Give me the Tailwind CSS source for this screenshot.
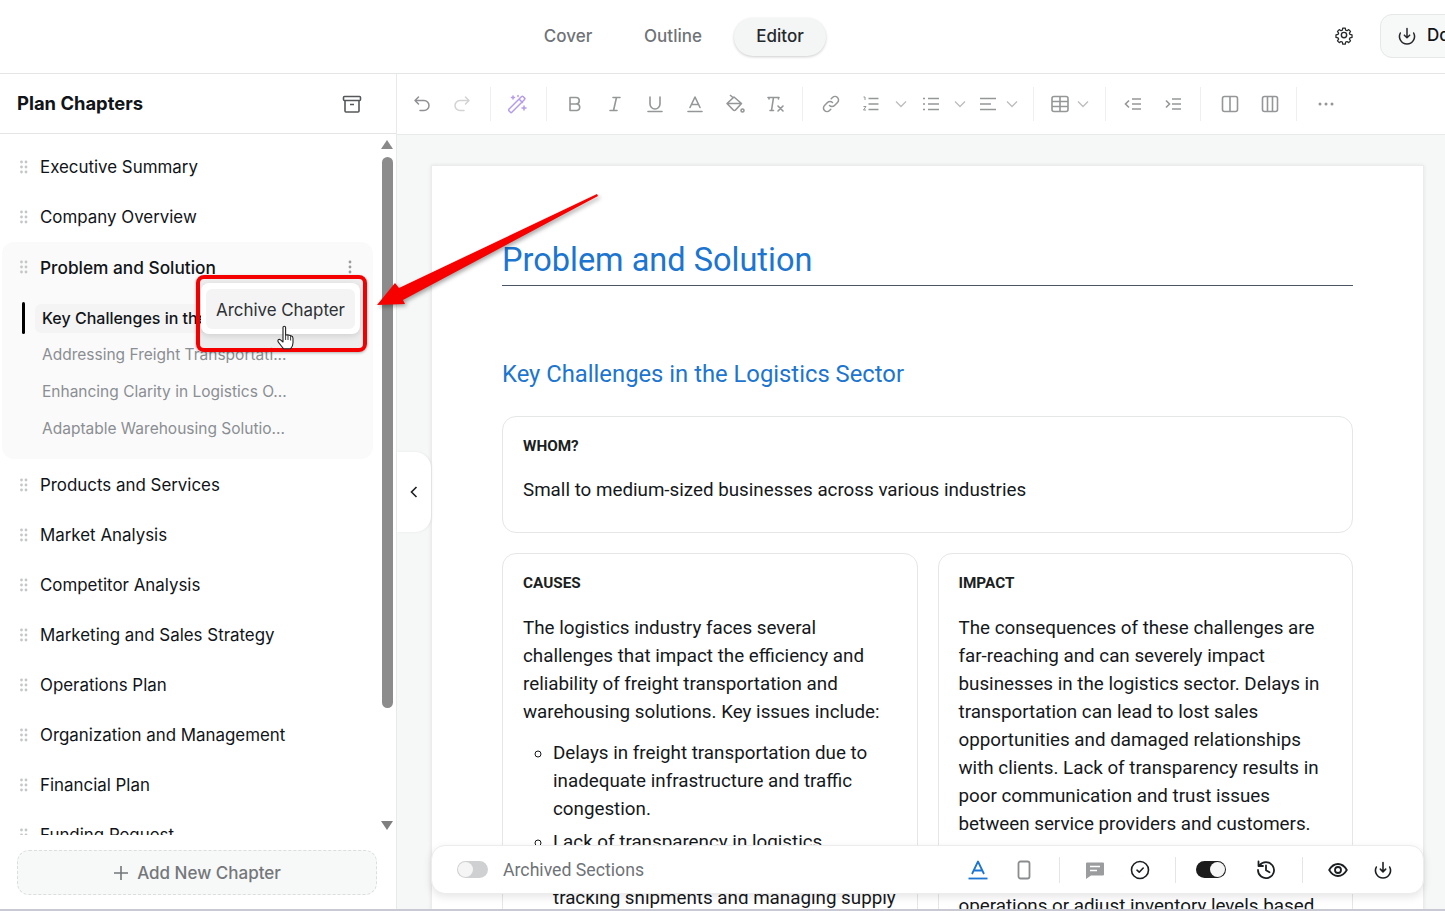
<!DOCTYPE html>
<html lang="en">
<head>
    <meta charset="UTF-8">
    <title>Plan Editor</title>
    <script src="https://cdn.jsdelivr.net/npm/@tailwindcss/browser@4"></script>
</head>
<body class="relative h-[911px] w-[1445px] overflow-hidden bg-white font-['Inter',sans-serif] text-[#111418]">

    <!-- top bar -->
    <header class="flex h-[74px] items-center border-b border-[#e4e5e5] pl-[522px] pr-0">
        <nav class="flex items-center text-[17px] font-medium text-[#6f7377]">
            <a class="flex h-[38px] w-[92px] items-center justify-center">Cover</a>
            <a class="ml-[14px] flex h-[38px] w-[90px] items-center justify-center">Outline</a>
            <a class="ml-[16px] flex h-[38px] w-[92px] items-center justify-center rounded-full bg-[#f4f5f5] text-[#26292c] shadow-[0_1px_3px_rgba(0,0,0,0.2)]">Editor</a>
        </nav>
        <svg class="-mt-[3px] ml-[508px] h-5 w-5 shrink-0" viewBox="0 0 24 24" fill="none" stroke="#26292c" stroke-width="1.7" stroke-linejoin="round"><path d="M10.3 2.8h3.4l.5 2.7 1.8.8 2.3-1.5 2.4 2.4-1.5 2.3.8 1.8 2.7.5v3.4l-2.7.5-.8 1.8 1.5 2.3-2.4 2.4-2.3-1.5-1.8.8-.5 2.7h-3.4l-.5-2.7-1.8-.8-2.3 1.5-2.4-2.4 1.5-2.3-.8-1.8-2.7-.5v-3.4l2.7-.5.8-1.8-1.5-2.3 2.4-2.4 2.3 1.5 1.8-.8z" transform="translate(1.2 1.2) scale(.9)"/><circle cx="12" cy="12" r="3.2"/></svg>
        <button class="-mt-[2px] ml-[26px] flex h-[44px] w-[150px] shrink-0 items-center gap-[10px] rounded-xl border border-[#e6e8e8] bg-[#f7f8f8] pl-[16px] text-[17px] font-medium text-[#111418]">
            <svg class="h-[20px] w-[20px]" viewBox="0 0 24 24" fill="none" stroke="#26292c" stroke-width="1.8" stroke-linecap="round" stroke-linejoin="round"><path d="M4 8.400A9 9 0 1 0 20 8.400M12 3v11M8.800 11 12 14.200 15.200 11"/></svg>
            Download
        </button>
    </header>

    <div class="flex h-[837px]">
        <!-- sidebar -->
        <aside class="flex w-[397px] shrink-0 flex-col border-r border-[#e8e9e9]">
            <div class="flex h-[60px] shrink-0 items-center justify-between border-b border-[#e4e5e5] pl-[17px] pr-[34px]">
                <h2 class="text-[18.400px] font-bold">Plan Chapters</h2>
                <svg class="h-[20px] w-[20px]" viewBox="0 0 20 20" fill="none" stroke="#55585b" stroke-width="1.6" stroke-linejoin="round"><rect x="1.5" y="2.5" width="17" height="4" rx="1"/><path d="M3 6.5V17a1 1 0 0 0 1 1h12a1 1 0 0 0 1-1V6.5M8 10.5h4"/></svg>
            </div>
            <div class="flex h-[701px] shrink-0">
                <div class="h-full w-[379px] overflow-hidden pt-[8px] text-[16.900px]">
                    <div class="flex h-[50px] items-center pl-[20px] pt-[2px]"><svg class="-mt-[2px] mr-[12px] h-[14px] w-[8px]" viewBox="0 0 8 14" fill="#c4c6c8"><circle cx="1.5" cy="2" r="1.4"/><circle cx="6" cy="2" r="1.4"/><circle cx="1.5" cy="7" r="1.4"/><circle cx="6" cy="7" r="1.4"/><circle cx="1.5" cy="12" r="1.4"/><circle cx="6" cy="12" r="1.4"/></svg>Executive Summary</div>
                    <div class="flex h-[50px] items-center pl-[20px] pt-[2px]"><svg class="-mt-[2px] mr-[12px] h-[14px] w-[8px]" viewBox="0 0 8 14" fill="#c4c6c8"><circle cx="1.5" cy="2" r="1.4"/><circle cx="6" cy="2" r="1.4"/><circle cx="1.5" cy="7" r="1.4"/><circle cx="6" cy="7" r="1.4"/><circle cx="1.5" cy="12" r="1.4"/><circle cx="6" cy="12" r="1.4"/></svg>Company Overview</div>
                    <div class="ml-[2px] mr-[6px] h-[217px] rounded-xl bg-[#fafafa]">
                        <div class="flex h-[50px] items-center pl-[18px] pr-[21px] pt-[2px]"><svg class="-mt-[2px] mr-[12px] h-[14px] w-[8px]" viewBox="0 0 8 14" fill="#c4c6c8"><circle cx="1.5" cy="2" r="1.4"/><circle cx="6" cy="2" r="1.4"/><circle cx="1.5" cy="7" r="1.4"/><circle cx="6" cy="7" r="1.4"/><circle cx="1.5" cy="12" r="1.4"/><circle cx="6" cy="12" r="1.4"/></svg><span class="flex-1 text-[17.300px] font-medium">Problem and Solution</span><svg class="-mt-[2px] h-[14px] w-[4px]" viewBox="0 0 4 14" fill="#9a9c9e"><circle cx="2" cy="2" r="1.4"/><circle cx="2" cy="7" r="1.4"/><circle cx="2" cy="12" r="1.4"/></svg></div>
                        <div class="flex items-center pl-[20px] pt-[10px]">
                            <span class="h-[32px] w-[3px] rounded-full bg-black"></span>
                            <span class="ml-[10px] flex h-[29px] w-[170px] items-center overflow-hidden whitespace-nowrap rounded-l-md bg-[#f4f4f4] pl-[7px] text-[16px] font-medium">Key Challenges in the Logistics Sector</span>
                        </div>
                        <div class="pl-[40px] pt-[2px] text-[15.5px] text-[#8b8e93]">
                            <p class="flex h-[37px] items-center">Addressing Freight Transportati...</p>
                            <p class="flex h-[37px] items-center">Enhancing Clarity in Logistics O...</p>
                            <p class="flex h-[37px] items-center">Adaptable Warehousing Solutio...</p>
                        </div>
                    </div>
                    <div class="mt-[1px] flex h-[50px] items-center pl-[20px] pt-[2px]"><svg class="-mt-[2px] mr-[12px] h-[14px] w-[8px]" viewBox="0 0 8 14" fill="#c4c6c8"><circle cx="1.5" cy="2" r="1.4"/><circle cx="6" cy="2" r="1.4"/><circle cx="1.5" cy="7" r="1.4"/><circle cx="6" cy="7" r="1.4"/><circle cx="1.5" cy="12" r="1.4"/><circle cx="6" cy="12" r="1.4"/></svg>Products and Services</div>
                    <div class="flex h-[50px] items-center pl-[20px] pt-[2px]"><svg class="-mt-[2px] mr-[12px] h-[14px] w-[8px]" viewBox="0 0 8 14" fill="#c4c6c8"><circle cx="1.5" cy="2" r="1.4"/><circle cx="6" cy="2" r="1.4"/><circle cx="1.5" cy="7" r="1.4"/><circle cx="6" cy="7" r="1.4"/><circle cx="1.5" cy="12" r="1.4"/><circle cx="6" cy="12" r="1.4"/></svg>Market Analysis</div>
                    <div class="flex h-[50px] items-center pl-[20px] pt-[2px]"><svg class="-mt-[2px] mr-[12px] h-[14px] w-[8px]" viewBox="0 0 8 14" fill="#c4c6c8"><circle cx="1.5" cy="2" r="1.4"/><circle cx="6" cy="2" r="1.4"/><circle cx="1.5" cy="7" r="1.4"/><circle cx="6" cy="7" r="1.4"/><circle cx="1.5" cy="12" r="1.4"/><circle cx="6" cy="12" r="1.4"/></svg>Competitor Analysis</div>
                    <div class="flex h-[50px] items-center pl-[20px] pt-[2px]"><svg class="-mt-[2px] mr-[12px] h-[14px] w-[8px]" viewBox="0 0 8 14" fill="#c4c6c8"><circle cx="1.5" cy="2" r="1.4"/><circle cx="6" cy="2" r="1.4"/><circle cx="1.5" cy="7" r="1.4"/><circle cx="6" cy="7" r="1.4"/><circle cx="1.5" cy="12" r="1.4"/><circle cx="6" cy="12" r="1.4"/></svg>Marketing and Sales Strategy</div>
                    <div class="flex h-[50px] items-center pl-[20px] pt-[2px]"><svg class="-mt-[2px] mr-[12px] h-[14px] w-[8px]" viewBox="0 0 8 14" fill="#c4c6c8"><circle cx="1.5" cy="2" r="1.4"/><circle cx="6" cy="2" r="1.4"/><circle cx="1.5" cy="7" r="1.4"/><circle cx="6" cy="7" r="1.4"/><circle cx="1.5" cy="12" r="1.4"/><circle cx="6" cy="12" r="1.4"/></svg>Operations Plan</div>
                    <div class="flex h-[50px] items-center pl-[20px] pt-[2px]"><svg class="-mt-[2px] mr-[12px] h-[14px] w-[8px]" viewBox="0 0 8 14" fill="#c4c6c8"><circle cx="1.5" cy="2" r="1.4"/><circle cx="6" cy="2" r="1.4"/><circle cx="1.5" cy="7" r="1.4"/><circle cx="6" cy="7" r="1.4"/><circle cx="1.5" cy="12" r="1.4"/><circle cx="6" cy="12" r="1.4"/></svg>Organization and Management</div>
                    <div class="flex h-[50px] items-center pl-[20px] pt-[2px]"><svg class="-mt-[2px] mr-[12px] h-[14px] w-[8px]" viewBox="0 0 8 14" fill="#c4c6c8"><circle cx="1.5" cy="2" r="1.4"/><circle cx="6" cy="2" r="1.4"/><circle cx="1.5" cy="7" r="1.4"/><circle cx="6" cy="7" r="1.4"/><circle cx="1.5" cy="12" r="1.4"/><circle cx="6" cy="12" r="1.4"/></svg>Financial Plan</div>
                    <div class="flex h-[50px] items-center pl-[20px] pt-[2px]"><svg class="-mt-[2px] mr-[12px] h-[14px] w-[8px]" viewBox="0 0 8 14" fill="#c4c6c8"><circle cx="1.5" cy="2" r="1.4"/><circle cx="6" cy="2" r="1.4"/><circle cx="1.5" cy="7" r="1.4"/><circle cx="6" cy="7" r="1.4"/><circle cx="1.5" cy="12" r="1.4"/><circle cx="6" cy="12" r="1.4"/></svg>Funding Request</div>
                </div>
                <!-- scrollbar -->
                <div class="flex w-[16px] flex-col items-center pt-[6px]">
                    <span class="h-0 w-0 border-x-[6px] border-b-[9px] border-x-transparent border-b-[#8a8a8a]"></span>
                    <span class="mt-[8px] h-[551px] w-[11px] rounded-full bg-[#8c8c8c]"></span>
                    <span class="mt-[113px] h-0 w-0 border-x-[6px] border-t-[9px] border-x-transparent border-t-[#7f7f7f]"></span>
                </div>
            </div>
            <div class="px-[17px] pt-[15px]">
                <button class="flex h-[45px] w-[360px] items-center justify-center gap-[8px] rounded-xl border border-dashed border-[#dcdede] bg-[#f7f8f8] pt-[3px] text-[17px] font-medium text-[#74777a]">
                    <svg class="-mt-[3px] h-[16px] w-[16px]" viewBox="0 0 16 16" stroke="#74777a" stroke-width="1.6"><path d="M8 1v14M1 8h14"/></svg>
                    Add New Chapter
                </button>
            </div>
        </aside>

        <!-- editor -->
        <main class="flex min-w-0 flex-1 flex-col">
            <div class="flex h-[61px] shrink-0 items-center border-b border-[#e8e9e9] pl-[15px] text-[#9a9c9e]">
                <svg class="h-5 w-5" viewBox="0 0 20 20" fill="none" stroke="#8f9194" stroke-width="1.5" stroke-linecap="round" stroke-linejoin="round"><path d="M6.5 3 3 6.5 6.5 10M3 6.5h9a4.8 4.8 0 0 1 0 10H8"/></svg>
                <svg class="ml-[20px] h-5 w-5" viewBox="0 0 20 20" fill="none" stroke="#d2d3d4" stroke-width="1.5" stroke-linecap="round" stroke-linejoin="round"><path d="M13.5 3 17 6.5 13.5 10M17 6.5H8a4.8 4.8 0 0 0 0 10h4"/></svg>
                <span class="ml-[18px] h-[34px] w-px bg-[#efefef]"></span>
                <svg class="ml-[17px] h-[20px] w-[20px]" viewBox="0 0 20 20" fill="none" stroke="#b49ceb" stroke-width="1.5" stroke-linecap="round" stroke-linejoin="round"><rect x="-1.5" y="8" width="20" height="4.2" rx="1" transform="rotate(-45 9 10)"/><path d="M11.5 5.5l3 3M5 2v3M3.5 3.500h3M16 12v4M14 14h4M10 1.500v1"/></svg>
                <span class="ml-[18px] h-[34px] w-px bg-[#efefef]"></span>
                <svg class="ml-[18px] h-5 w-5" viewBox="0 0 20 20" fill="none" stroke="#949698" stroke-width="1.6" stroke-linejoin="round"><path d="M5 3.500h6a3.200 3.200 0 0 1 0 6.500H5zM5 10h7a3.300 3.300 0 0 1 0 6.500H5z"/></svg>
                <svg class="ml-[20px] h-5 w-5" viewBox="0 0 20 20" fill="none" stroke="#949698" stroke-width="1.6" stroke-linecap="round"><path d="M8 3.500h7M5 16.500h7M11.500 3.500l-3 13"/></svg>
                <svg class="ml-[20px] h-5 w-5" viewBox="0 0 20 20" fill="none" stroke="#949698" stroke-width="1.6" stroke-linecap="round"><path d="M5 3v7a5 5 0 0 0 10 0V3M3 17.500h14"/></svg>
                <svg class="ml-[20px] h-5 w-5" viewBox="0 0 20 20" fill="none" stroke="#949698" stroke-width="1.6" stroke-linecap="round" stroke-linejoin="round"><path d="M5 13.500 10 3l5 10.500M6.500 10.500h7M3 17.500h14"/></svg>
                <svg class="ml-[20px] h-5 w-5" viewBox="0 0 20 20" fill="none" stroke="#949698" stroke-width="1.6" stroke-linejoin="round"><path d="M2 9.500 9 3l7.500 6.500-6 6.500a1.500 1.500 0 0 1-2.200 0zM2 9.500h14.500M5 1l3.500 3"/><circle cx="17.500" cy="16.500" r="1.500"/></svg>
                <svg class="ml-[20px] h-5 w-5" viewBox="0 0 20 20" fill="none" stroke="#949698" stroke-width="1.6" stroke-linecap="round"><path d="M3 3.500h11M4 3.500v1.500M13.500 3.500v1.500M8.500 3.500l-2 13M5 16.500h3.500M13 12l5 5M18 12l-5 5"/></svg>
                <span class="ml-[17px] h-[34px] w-px bg-[#efefef]"></span>
                <svg class="ml-[18px] h-5 w-5" viewBox="0 0 20 20" fill="none" stroke="#949698" stroke-width="1.5" stroke-linecap="round"><path d="M8.500 11.500a3.500 3.500 0 0 0 5 0l3-3a3.500 3.500 0 0 0-5-5l-1.300 1.300M11.500 8.500a3.500 3.500 0 0 0-5 0l-3 3a3.500 3.500 0 0 0 5 5l1.300-1.300"/></svg>
                <svg class="ml-[20px] h-5 w-5" viewBox="0 0 20 20" fill="none" stroke="#949698" stroke-width="1.6"><path d="M7.500 4.500h10M7.500 10h10M7.500 15.500h10"/><path d="M2.500 3h1.500v3M2.500 12.500h2.500l-2.500 3.500h2.500" stroke-width="1"/></svg>
                <svg class="ml-[14px] h-[12px] w-[12px]" viewBox="0 0 12 12" fill="none" stroke="#bcbdbf" stroke-width="1.3"><path d="M1 3.500 6 8.500 11 3.500"/></svg>
                <svg class="ml-[14px] h-5 w-5" viewBox="0 0 20 20" fill="none" stroke="#949698" stroke-width="1.6"><path d="M7 4.500h11M7 10h11M7 15.500h11M2 4.500h2M2 10h2M2 15.500h2"/></svg>
                <svg class="ml-[13px] h-[12px] w-[12px]" viewBox="0 0 12 12" fill="none" stroke="#bcbdbf" stroke-width="1.3"><path d="M1 3.500 6 8.500 11 3.500"/></svg>
                <svg class="ml-[12px] h-5 w-5" viewBox="0 0 20 20" fill="none" stroke="#949698" stroke-width="1.6"><path d="M2 4.500h16M2 10h11M2 15.500h16"/></svg>
                <svg class="ml-[8px] h-[12px] w-[12px]" viewBox="0 0 12 12" fill="none" stroke="#bcbdbf" stroke-width="1.3"><path d="M1 3.500 6 8.500 11 3.500"/></svg>
                <span class="ml-[15px] h-[34px] w-px bg-[#efefef]"></span>
                <svg class="ml-[16px] h-5 w-5" viewBox="0 0 20 20" fill="none" stroke="#949698" stroke-width="1.6"><rect x="2" y="2.500" width="16" height="15" rx="2"/><path d="M2 7.500h16M2 12.500h16M10 2.500v15"/></svg>
                <svg class="ml-[7px] h-[12px] w-[12px]" viewBox="0 0 12 12" fill="none" stroke="#bcbdbf" stroke-width="1.3"><path d="M1 3.500 6 8.500 11 3.500"/></svg>
                <span class="ml-[16px] h-[34px] w-px bg-[#efefef]"></span>
                <svg class="ml-[17px] h-5 w-5" viewBox="0 0 20 20" fill="none" stroke="#949698" stroke-width="1.6"><path d="M9 5h9M9 10h9M9 15h9M6 6.500 2.500 10 6 13.500"/></svg>
                <svg class="ml-[20px] h-5 w-5" viewBox="0 0 20 20" fill="none" stroke="#949698" stroke-width="1.6"><path d="M9 5h9M9 10h9M9 15h9M3 6.500 6.500 10 3 13.500"/></svg>
                <span class="ml-[17px] h-[34px] w-px bg-[#efefef]"></span>
                <svg class="ml-[19px] h-5 w-5" viewBox="0 0 20 20" fill="none" stroke="#949698" stroke-width="1.6"><rect x="2.500" y="2.500" width="15" height="15" rx="2"/><path d="M10 2.500v15"/></svg>
                <svg class="ml-[20px] h-5 w-5" viewBox="0 0 20 20" fill="none" stroke="#949698" stroke-width="1.6"><rect x="2.500" y="2.500" width="15" height="15" rx="2"/><path d="M7.500 2.500v15M12.500 2.500v15"/></svg>
                <span class="ml-[16px] h-[34px] w-px bg-[#efefef]"></span>
                <svg class="ml-[21px] h-[16px] w-[16px]" viewBox="0 0 16 16" fill="#949698"><circle cx="2" cy="8" r="1.500"/><circle cx="8" cy="8" r="1.500"/><circle cx="14" cy="8" r="1.500"/></svg>
            </div>

            <div class="flex-1 overflow-hidden bg-[#f6f7f7] pl-[34px] pr-[21px] pt-[30px]">
                <article class="h-[800px] border border-[#ececec] bg-white px-[70px] pt-[56px] font-['Roboto',sans-serif] shadow-[0_0_4px_rgba(0,0,0,0.08)]">
                    <h1 class="h-[64px] border-b border-[#4b5563] pt-[18px] text-[32.500px] leading-[40px] text-[#1c75d0]">Problem and Solution</h1>
                    <h2 class="mt-[70px] text-[23.800px] leading-[36px] text-[#1c75d0]">Key Challenges in the Logistics Sector</h2>
                    <section class="mt-[24px] h-[117px] rounded-[14px] border border-[#e5e6e6] px-[20px] pt-[20px]">
                        <h3 class="text-[15.300px] font-bold leading-[18px] text-[#1c1f22]">WHOM?</h3>
                        <p class="mt-[21px] text-[18.800px] leading-[28px] text-[#15181b]">Small to medium-sized businesses across various industries</p>
                    </section>
                    <div class="mt-[20px] grid grid-cols-2 gap-[20px]">
                        <section class="h-[500px] rounded-[14px] border border-[#e5e6e6] px-[20px] pt-[20px]">
                            <h3 class="text-[15.300px] font-bold leading-[18px] text-[#1c1f22]">CAUSES</h3>
                            <p class="mt-[22px] text-[18.800px] leading-[28px] text-[#15181b]">The logistics industry faces several challenges that impact the efficiency and reliability of freight transportation and warehousing solutions. Key issues include:</p>
                            <ul class="mt-[13px] list-[circle] pl-[30px] text-[18.800px] leading-[28px] text-[#15181b]">
                                <li>Delays in freight transportation due to inadequate infrastructure and traffic congestion.</li>
                                <li class="mt-[5px]">Lack of transparency in logistics<br>operations, making it difficult in<br>tracking shipments and managing supply</li>
                            </ul>
                        </section>
                        <section class="h-[500px] rounded-[14px] border border-[#e5e6e6] px-[20px] pt-[20px]">
                            <h3 class="text-[15.300px] font-bold leading-[18px] text-[#1c1f22]">IMPACT</h3>
                            <p class="mt-[22px] text-[18.800px] leading-[28px] text-[#15181b]">The consequences of these challenges are far-reaching and can severely impact businesses in the logistics sector. Delays in transportation can lead to lost sales opportunities and damaged relationships with clients. Lack of transparency results in poor communication and trust issues between service providers and customers.</p>
                            <p class="mt-[26px] text-[18.800px] leading-[28px] text-[#15181b]">Inefficient warehousing forces businesses to<br>operations or adjust inventory levels based</p>
                        </section>
                    </div>
                </article>
            </div>
        </main>
    </div>

    <!-- collapse handle -->
    <button class="absolute left-[397px] top-[452px] flex h-[80px] w-[34px] items-center justify-center rounded-r-2xl bg-white shadow-[1px_0_3px_rgba(0,0,0,0.06)]">
        <svg class="h-[14px] w-[14px]" viewBox="0 0 14 14" fill="none" stroke="#1c1f22" stroke-width="1.6"><path d="M9.500 2 4.500 7l5 5"/></svg>
    </button>

    <!-- bottom floating bar -->
    <div class="absolute left-[431px] top-[845px] flex h-[49px] w-[993px] items-center rounded-[14px] border border-[#ececec] bg-white pl-[25px] shadow-[0_3px_8px_rgba(0,0,0,0.1)]">
        <span class="flex h-[17px] w-[31px] shrink-0 items-center rounded-full bg-[#cfd0d1] pl-[1px]"><span class="h-[15px] w-[15px] rounded-full bg-[#f5f5f5]"></span></span>
        <span class="ml-[15px] w-[141px] shrink-0 whitespace-nowrap pt-[1px] font-['Roboto',sans-serif] text-[17.700px] text-[#6f7377]">Archived Sections</span>
        <svg class="ml-[323px] h-[22px] w-[22px] shrink-0" viewBox="0 0 22 22" fill="none" stroke="#1c75d0" stroke-width="1.800" stroke-linejoin="round"><path d="M5 15 11 2.500 17 15M7 11.500h8"/><path d="M1.500 19.500h19"/></svg>
        <svg class="ml-[28px] h-[20px] w-[14px] shrink-0" viewBox="0 0 14 20" fill="none" stroke="#8a8c8e" stroke-width="1.800"><rect x="1.500" y="1.500" width="11" height="17" rx="2"/></svg>
        <span class="ml-[28px] h-[26px] w-px shrink-0 bg-[#e5e5e5]"></span>
        <svg class="ml-[25px] h-[20px] w-[20px] shrink-0" viewBox="0 0 20 20" fill="#9a9c9e"><path d="M2 2.500h16a1 1 0 0 1 1 1v11a1 1 0 0 1-1 1H6l-5 3.500v-15.500a1 1 0 0 1 1-1z"/><path d="M5 6.500h10M5 10.500h7" stroke="#fff" stroke-width="1.500"/></svg>
        <svg class="ml-[25px] h-[20px] w-[20px] shrink-0" viewBox="0 0 20 20" fill="none" stroke="#1c1f22" stroke-width="1.600" stroke-linecap="round" stroke-linejoin="round"><circle cx="10" cy="10" r="8.500"/><path d="M7 10.200 9.200 12.200 13.200 8"/></svg>
        <span class="ml-[25px] h-[26px] w-px shrink-0 bg-[#e5e5e5]"></span>
        <span class="ml-[20px] flex h-[17px] w-[30px] shrink-0 items-center justify-end rounded-full bg-[#1c1c1c] pr-[1px]"><span class="h-[15px] w-[15px] rounded-full bg-[#f5f5f5]"></span></span>
        <svg class="ml-[30px] h-[20px] w-[20px] shrink-0" viewBox="0 0 20 20" fill="none" stroke="#1c1f22" stroke-width="1.800" stroke-linecap="round" stroke-linejoin="round"><path d="M3.500 5.500A8 8 0 1 1 2 10M2.500 1.500v4.500h4.500M10 5.500v4.800l3.500 2"/></svg>
        <span class="ml-[26px] h-[26px] w-px shrink-0 bg-[#e5e5e5]"></span>
        <svg class="ml-[25px] h-[20px] w-[20px] shrink-0" viewBox="0 0 20 20" fill="none" stroke="#1c1f22" stroke-width="1.800"><path d="M1.200 10C3.500 6 6.500 4 10 4s6.500 2 8.800 6c-2.300 4-5.300 6-8.800 6s-6.500-2-8.800-6z"/><circle cx="10" cy="10" r="3"/></svg>
        <svg class="ml-[25px] h-[20px] w-[20px] shrink-0" viewBox="0 0 24 24" fill="none" stroke="#1c1f22" stroke-width="1.900" stroke-linecap="round" stroke-linejoin="round"><path d="M4 8.400A9 9 0 1 0 20 8.400M12 3v11M8.800 11 12 14.200 15.200 11"/></svg>
    </div>

    <!-- archive popup with annotation -->
    <div class="absolute left-[196px] top-[275px] h-[77px] w-[171px] rounded-[8px] border-[4px] border-[#f50000] bg-black/5 shadow-[0_1px_3px_rgba(0,0,0,0.3)]">
        <div class="ml-[1px] mt-[4px] h-[51px] w-[159px] rounded-lg bg-white px-[5px] pb-[5px] pt-[6px] shadow-[0_2px_6px_rgba(0,0,0,0.12)]">
            <div class="flex h-[40px] items-center justify-center rounded-md bg-[#f4f4f4] pt-[3px] text-[16.900px] text-[#2d3034]">Archive Chapter</div>
        </div>
    </div>
    <svg class="absolute left-[277px] top-[325px] h-[26px] w-[18px]" viewBox="0 0 18 26"><path d="M6 2.500c0-1.600 2.600-1.600 2.600 0v7.500l1.800-.2 1.800.5 1.800.5c1.500.4 2 1.200 2 2.500v4.500c0 2.500-1.400 5-2.500 6H6.500c-1-1.600-5-6-5.500-7.500-.5-1.700 1.300-2.500 2.500-1.500L6 17z" fill="#fff" stroke="#222" stroke-width="1.100" stroke-linejoin="round"/><path d="M8.600 10v5M11 10v5M13.600 11v4.500" stroke="#222" stroke-width=".9"/></svg>
    <svg class="absolute left-[370px] top-[188px] h-[125px] w-[235px]" viewBox="370 188 235 125"><polygon points="597,194 598,196 403,300 405,304 377,305 395,283 399,288" fill="#f60000" style="filter:drop-shadow(2px 2px 2px rgba(0,0,0,0.35))"/></svg>

    <div class="absolute bottom-0 left-0 h-[2px] w-full bg-[#c9c9d3]"></div>
</body>
</html>
